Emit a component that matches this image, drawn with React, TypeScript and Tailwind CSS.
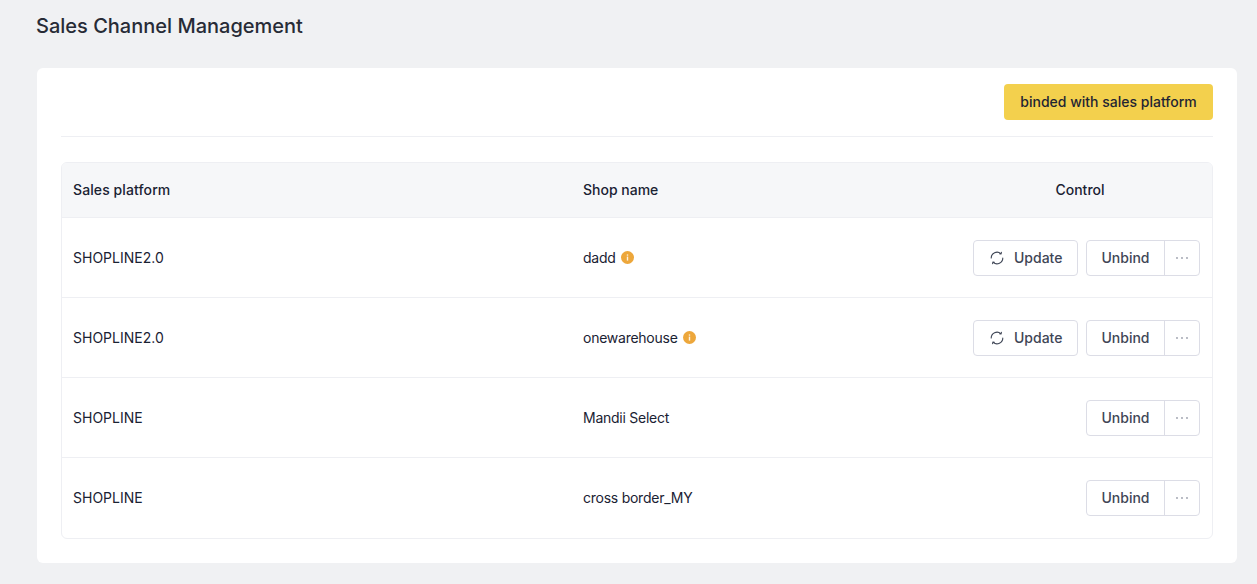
const rows = [
  { platform: "SHOPLINE2.0", shop: "dadd", info: true },
  { platform: "SHOPLINE2.0", shop: "onewarehouse", info: true },
  { platform: "SHOPLINE", shop: "Mandii Select", info: false },
  { platform: "SHOPLINE", shop: "cross border_MY", info: false },
];

function InfoIcon() {
  return (
    <svg width="13" height="13" viewBox="0 0 13 13" className="ml-[5px] mb-px shrink-0">
      <circle cx="6.5" cy="6.5" r="6.5" fill="#eda73b" />
      <rect x="5.8" y="5.6" width="1.4" height="4" fill="#ffffff" opacity="0.85" />
      <rect x="5.8" y="3.4" width="1.4" height="1.3" fill="#ffffff" opacity="0.85" />
    </svg>
  );
}

function SyncIcon() {
  return (
    <svg width="14" height="14" viewBox="0 0 14 14" fill="none" stroke="#3f4656" strokeWidth="1.1" strokeLinecap="round" className="shrink-0">
      <path d="M1.2 7A5.8 5.8 0 0 1 10.8 2.6" />
      <path d="M12.8 7A5.8 5.8 0 0 1 3.2 11.4" />
      <path d="M11.4 1.4 11 2.8 9.6 2.7" />
      <path d="M2.6 12.6 3 11.2 4.4 11.3" />
    </svg>
  );
}

export default function App() {
  return (
    <div className="min-h-[584px] bg-[#f0f1f3] pl-[37px] pr-5 pt-[14px] font-['Inter','Liberation_Sans',sans-serif] text-[14px] text-[#1a2233]">
      <h1 className="-ml-px h-[24px] text-[20px] leading-[24px] font-medium text-[#272b36]">Sales Channel Management</h1>
      <div className="mt-[30px] h-[495px] rounded-md bg-white px-6 pt-4">
        <div className="flex h-[53px] items-start justify-end border-b border-[#eeeff3]">
          <button className="h-9 w-[209px] rounded bg-[#f3d04d] pb-px text-[14px] font-medium text-[#1f2533]">binded with sales platform</button>
        </div>
        <div className="mt-[25px] overflow-hidden rounded-md border border-[#eeeff3]">
          <div className="flex h-[55px] items-center border-b border-[#eeeff3] bg-[#f6f7f9] pb-[2px] font-medium">
            <div className="w-[509px] pl-[11px] tracking-[0.1px]">Sales platform</div>
            <div className="w-[377px] pl-3">Shop name</div>
            <div className="flex-1 text-center">Control</div>
          </div>
          {rows.map((r, i) => (
            <div key={i} className={`flex h-[80px] items-center ${i < 3 ? "border-b border-[#eeeff3]" : "pb-px"}`}>
              <div className="w-[509px] pl-[11px]">{r.platform}</div>
              <div className="flex w-[377px] items-center pl-3 tracking-[-0.25px]">
                {r.shop}
                {r.info && <InfoIcon />}
              </div>
              <div className="flex flex-1 justify-end gap-2 pr-3 font-medium text-[#3f4656]">
                {r.info && (
                  <button className="flex h-9 w-[105px] items-center gap-[10px] rounded border border-[#dcdde6] bg-white pl-4">
                    <SyncIcon />
                    Update
                  </button>
                )}
                <div className="flex h-9 w-[114px] rounded border border-[#dcdde6] bg-white">
                  <button className="w-[78px] border-r border-[#dcdde6]">Unbind</button>
                  <button className="flex-1 text-[#9a9eaa]">
                    <svg width="14" height="4" viewBox="0 0 14 4" className="mx-auto" fill="#9a9eaa">
                      <circle cx="2" cy="2" r="0.9" />
                      <circle cx="7" cy="2" r="0.9" />
                      <circle cx="12" cy="2" r="0.9" />
                    </svg>
                  </button>
                </div>
              </div>
            </div>
          ))}
        </div>
      </div>
    </div>
  );
}
